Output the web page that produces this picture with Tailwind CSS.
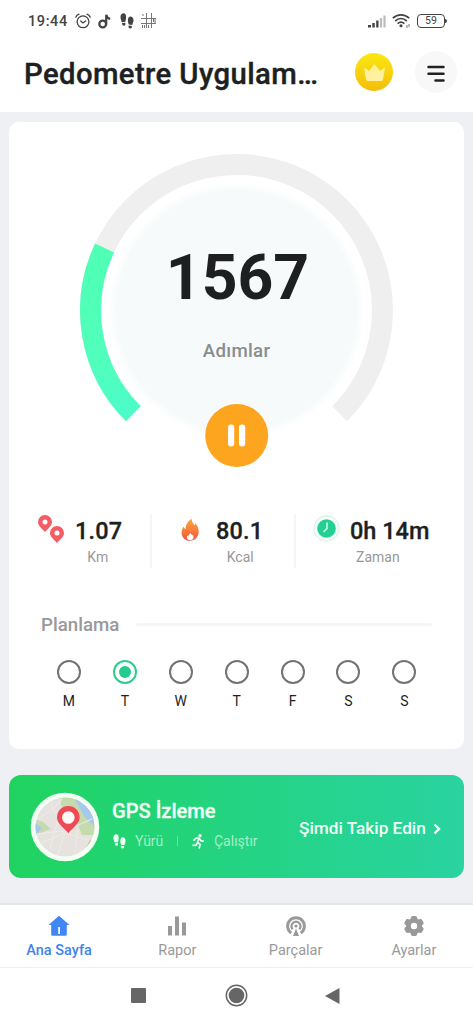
<!DOCTYPE html>
<html lang="tr">
<head>
<meta charset="utf-8">
<meta name="viewport" content="width=device-width, initial-scale=1">
<title>Pedometre Uygulaması</title>
<script src="https://cdn.jsdelivr.net/npm/@tailwindcss/browser@4"></script>
</head>
<body class="bg-[#eef0f4] font-['Roboto',sans-serif] text-[#1e1f21]">
<svg class="hidden">
  <symbol id="steps" viewBox="0 0 14 16">
    <path d="M3.200.3C5.400.1 6.300 2.300 6.100 4.700c-.1 1.500-.5 2.800-.7 4L1.800 9.200C1.400 7.500.6 6.200.5 4.400.4 2.200 1.400.5 3.200.3zM2 10.100l3.200-.4c.6 1.500.2 2.800-1.100 3-1.300.1-2-.8-2.100-2.600zM10.700 3.500c2 .2 2.900 2 2.800 4.100-.1 1.600-.8 2.900-1.200 4.500L8.700 11.600c-.2-1.200-.8-2.400-.8-3.900C7.800 5.300 8.700 3.300 10.700 3.500zM8.700 12.500l3.300.5c-.1 1.900-.8 2.600-2 2.500-1.400-.2-1.900-1.200-1.300-3z"/>
  </symbol>
  <symbol id="pin" viewBox="0 0 14 17">
    <path fill-rule="evenodd" d="M7 0a7 7 0 0 1 7 7c0 3.600-3.300 6-7 10C3.300 13 0 10.600 0 7a7 7 0 0 1 7-7zm0 4.400a2.500 2.500 0 1 0 0 5 2.500 2.500 0 0 0 0-5z"/>
  </symbol>
</svg>
<div class="flex h-[1024px] w-[473px] flex-col overflow-hidden">
  <div class="h-[112px] bg-white">
    <div class="flex h-[42px] items-center pl-[28px] pr-[26px] text-[#444]">
      <span class="w-[47px] pt-[2px] text-[14.500px] font-medium tracking-[0.600px]">19:44</span>
      <svg class="h-4 w-4" viewBox="0 0 16 16" fill="none" stroke="currentColor" stroke-width="1.300" stroke-linecap="round"><circle cx="8" cy="8.800" r="5.900"/><path d="M5.700 8l2.300 2 2.600-2M.8 4.200C1.400 2.600 2.500 1.600 4 1.100M15.200 4.200C14.600 2.600 13.500 1.600 12 1.100"/></svg>
      <svg class="ml-[7px] h-[15px] w-[13px]" viewBox="0 0 13 15" fill="none" stroke="currentColor" stroke-width="2.200"><circle cx="4.700" cy="10" r="3.400"/><path d="M8.200 10.500V.8C8.700 3.400 10 4.500 12.200 4.900"/></svg>
      <svg class="ml-[9px] h-4 w-[14px] fill-current"><use href="#steps"/></svg>
      <svg class="ml-[7px] h-4 w-4" viewBox="0 0 16 16" fill="none" stroke="#777" stroke-width="1"><path d="M5.500 0v15M10.500 0v15M0 5.500h15M0 10.500h15M14 6v4M1 2h2M1.500 12v3M3.500 12v3M7.500 12v3M12.500 6v3"/></svg>
      <svg class="ml-auto h-[14px] w-[18px]" viewBox="0 0 18 14" fill="#444"><path d="M0 11h3v2.500H0zM4.300 9h2.500v4.500H4.300zM8.200 6.500h2.300v7H8.200z"/><path fill="#bbb" d="M11.900 4h2.200v9.500h-2.200zM15.400 1.500h2.200v12h-2.200z"/></svg>
      <svg class="ml-[6px] h-4 w-[19px]" viewBox="0 0 19 16" fill="none" stroke="#444" stroke-width="1.700"><path d="M.8 5.200C5.600.7 12.400.7 17.200 5.200M3.200 8C6.700 4.800 11.300 4.800 14.800 8M5.600 10.700c2.100-1.900 4.700-1.900 6.800 0"/><circle cx="9" cy="12.800" r=".7"/><path stroke-width="1" stroke="#777" d="M15 12v3M17 11v3"/></svg>
      <div class="ml-[6px] flex h-[14px] w-[28px] items-center justify-center rounded-[4px] border-[1.500px] border-[#444] text-[10.500px] leading-none">59</div>
      <div class="h-1 w-[2px] rounded-r bg-[#444]"></div>
    </div>
    <div class="flex h-[60px] items-center pl-[24px]">
      <h1 class="w-[331px] pt-[3px] text-[29.300px] leading-[40px] font-medium tracking-[0.400px] whitespace-nowrap [-webkit-text-stroke:0.400px_#1e1f21]">Pedometre Uygulam…</h1>
      <div class="flex h-[38px] w-[38px] items-center justify-center rounded-full bg-gradient-to-b from-[#fbe810] to-[#f3bd0a]">
        <svg class="h-[17px] w-[21px]" viewBox="0 0 21 17"><path d="M.6 4.300 5 7.500 10.500.8 16 7.500l4.400-3.200-1.900 11.500q-.2.700-1 .7h-14q-.8 0-1-.7z" fill="#fff1a0" stroke="#fff1a0" stroke-linejoin="round"/></svg>
      </div>
      <div class="ml-[22px] flex h-[42px] w-[42px] items-center justify-center rounded-full bg-[#f8f8f9]">
        <svg class="mt-[2px] h-[17px] w-[18px]" viewBox="0 0 18 17" stroke="#222" stroke-width="2.500" stroke-linecap="round"><path d="M1.500 2h15M1.500 8.800h15M8.500 15.500h8"/></svg>
      </div>
    </div>
  </div>

  <div class="mx-[9px] mt-[10px] h-[627px] rounded-[10px] bg-white">
    <div class="relative h-[350px]">
      <svg class="absolute left-0 top-0 h-[350px] w-[455px]" viewBox="9 122 455 350" fill="none">
        <defs>
          <radialGradient id="disc"><stop offset=".93" stop-color="#f6fafb"/><stop offset="1" stop-color="#f6fafb" stop-opacity="0"/></radialGradient>
          <linearGradient id="arc" x1="0" y1="0" x2="0" y2="1"><stop stop-color="#4fffb4"/><stop offset=".7" stop-color="#50ffbc"/><stop offset="1" stop-color="#4cfbc8"/></linearGradient>
        </defs>
        <circle cx="236.500" cy="310.500" r="128" fill="url(#disc)"/>
        <path d="M133.300 413.700A146 146 0 1 1 339.700 413.700" stroke="#efeff0" stroke-width="21"/>
        <path d="M133.300 413.700A146 146 0 0 1 104.600 247.900" stroke="url(#arc)" stroke-width="21"/>
        <circle cx="236.700" cy="435.500" r="31.500" fill="#fda51e"/>
        <rect x="228" y="424.500" width="6.200" height="22" rx="3" fill="#fff"/><rect x="239" y="424.500" width="6.200" height="22" rx="3" fill="#fff"/>
      </svg>
      <div class="relative flex flex-col items-center pt-[120px]">
        <div class="pl-[2px] text-[62.500px] leading-[72px] font-bold">1567</div>
        <div class="mt-[25px] text-[18.700px] leading-6 font-medium tracking-[0.300px] text-[#8a8c8d]">Adımlar</div>
      </div>
    </div>

    <div class="flex h-[128px] pt-[42px]">
      <div class="flex h-[54px] w-[141px] pl-[29px]">
        <svg class="h-[30px] w-[27px] fill-[#f55d66]"><use href="#pin" x="0" y="1" width="14" height="17"/><use href="#pin" x="12" y="12" width="14" height="17"/></svg>
        <div class="ml-[10px] flex flex-col pt-[3px]"><b class="text-[23.500px] leading-7 font-medium tracking-[0.200px] [-webkit-text-stroke:0.300px_#1e1f21]">1.07</b><span class="-ml-[2px] pt-[2px] text-center text-[14px] leading-5 text-[#999]">Km</span></div>
      </div>
      <div class="flex h-[54px] w-[144px] border-l-2 border-[#f5f5f6] pl-[28px]">
        <svg class="mt-[4px] h-[24px] w-[20px]" viewBox="0 0 20 24"><defs><linearGradient id="fire" x1="0" y1="0" x2="0" y2="1"><stop stop-color="#fda43a"/><stop offset=".5" stop-color="#f9803a"/><stop offset="1" stop-color="#ed4f43"/></linearGradient></defs><path fill="url(#fire)" d="M11.500.8c.3 2.800 1.800 4.600 3 6.800.7-.8.8-1.700.8-2.700 2.500 3 3.800 6.500 3.300 10.200-.6 4.400-4 7.700-8.500 7.700-4.800 0-8.300-3.300-8.500-7.900C1.500 11.800 3 9.700 3.800 8.600c.3 1.400.7 2.200 1.800 2.700C5.500 6.400 8.200 3.200 11.500.8z"/><path fill="#fff" d="M10.800 15c.3 1.300 1 2 1.600 2.600l.6-.8c1.300 2.600.2 5.400-2.800 5.400-3 0-4.100-2.500-2.900-4.600l1 1.200c.1-1.800.9-2.900 2.500-3.800z"/></svg>
        <div class="ml-[16px] flex flex-col pt-[3px]"><b class="text-[23.500px] leading-7 font-medium tracking-[0.200px] [-webkit-text-stroke:0.300px_#1e1f21]">80.1</b><span class="pt-[2px] pl-[1px] text-center text-[14px] leading-5 text-[#999]">Kcal</span></div>
      </div>
      <div class="flex h-[54px] grow border-l-2 border-[#f5f5f6] pl-[16px]">
        <svg class="h-[29px] w-[29px]" viewBox="0 0 29 29" fill="none"><circle cx="14.500" cy="14.500" r="12.500" fill="#f6fdfa" stroke="#dcf3ea" stroke-width="1.300"/><circle cx="14.500" cy="14.500" r="9.300" fill="#25cf94"/><path d="M15 9v5.500l-3 3" stroke="#c9ffe9" stroke-width="1.600" stroke-linecap="round"/></svg>
        <div class="ml-[9px] flex flex-col items-start pt-[3px]"><b class="text-[23.500px] leading-7 font-medium whitespace-nowrap [-webkit-text-stroke:0.300px_#1e1f21]">0h 14m</b><span class="pt-[2px] pl-[6px] text-[14px] leading-5 text-[#999]">Zaman</span></div>
      </div>
    </div>

    <div class="flex h-[50px] items-center pr-[32px] pl-[32px]">
      <span class="w-[95px] pt-[1px] text-[18.700px] font-medium text-[#999]">Planlama</span>
      <div class="-mt-[2px] h-[3px] grow rounded bg-[#f6f6f7]"></div>
    </div>
    <div class="mt-[10px] flex pl-[32px] text-center text-[14px] leading-5">
      <div class="flex w-[55.900px] flex-col items-center gap-[7px]"><i class="h-6 w-6 rounded-full border-[2.500px] border-[#737373]"></i>M</div>
      <div class="flex w-[55.900px] flex-col items-center gap-[7px]"><i class="flex h-6 w-6 items-center justify-center rounded-full border-[2.500px] border-[#2dcd92]"><i class="h-3 w-3 rounded-full bg-[#22cc8d]"></i></i>T</div>
      <div class="flex w-[55.900px] flex-col items-center gap-[7px]"><i class="h-6 w-6 rounded-full border-[2.500px] border-[#737373]"></i>W</div>
      <div class="flex w-[55.900px] flex-col items-center gap-[7px]"><i class="h-6 w-6 rounded-full border-[2.500px] border-[#737373]"></i>T</div>
      <div class="flex w-[55.900px] flex-col items-center gap-[7px]"><i class="h-6 w-6 rounded-full border-[2.500px] border-[#737373]"></i>F</div>
      <div class="flex w-[55.900px] flex-col items-center gap-[7px]"><i class="h-6 w-6 rounded-full border-[2.500px] border-[#737373]"></i>S</div>
      <div class="flex w-[55.900px] flex-col items-center gap-[7px]"><i class="h-6 w-6 rounded-full border-[2.500px] border-[#737373]"></i>S</div>
    </div>
  </div>

  <div class="mx-[9px] mt-[26px] flex h-[103px] rounded-[12px] bg-gradient-to-r from-[#20d35f] to-[#2ad3a0] pl-[21px] text-[#f0fff5]">
    <svg class="mt-[17px] h-[70px] w-[70px]" viewBox="0 0 70 70">
      <defs><clipPath id="map"><circle cx="35" cy="35" r="29.500"/></clipPath></defs>
      <circle cx="35" cy="35" r="34.300" fill="#f4fff4"/>
      <g clip-path="url(#map)">
        <path fill="#e6e2df" d="M0 0h70v70H0z"/>
        <path fill="#c5dbad" d="M30 0h40v43H52L48 33 31 13zM5 27l8 3 8 7-16 6z"/>
        <path fill="#a6c8ef" d="M44 6l20 12v16L54 24zM3 28l4 4 5 4-8 9z"/>
        <path stroke="#efebe6" stroke-width="1" fill="none" d="M6 28C20 20 30 14 35 0M8 52l27-11 26 8M35 41l-8 24M20 9l8 18-8 30M48 36l-4 28M5 42l30-3 27-12"/>
        <path stroke="#b8c8a0" stroke-width="2" d="M61 48l-4 8"/>
      </g>
      <g transform="translate(27 14)"><path fill="#ec4a55" d="M11.300 0a11.300 11.300 0 0 1 11.300 11.300c0 6.500-6.500 10-11.300 16-4.800-6-11.300-9.500-11.300-16A11.300 11.300 0 0 1 11.300 0z"/><circle cx="11.300" cy="11.500" r="6.300" fill="#fffaf5"/></g>
    </svg>
    <div class="ml-[12px] w-[187px] pt-[23px]">
      <div class="text-[20.100px] leading-[26px] font-medium [-webkit-text-stroke:0.300px_#f0fff5]">GPS İzleme</div>
      <div class="mt-[7px] flex h-5 items-center text-[14px] text-[#a4efc3]">
        <svg class="ml-[1px] h-[15px] w-[13px] fill-[#f0fff5]"><use href="#steps"/></svg>
        <span class="ml-[9px] w-[42px] pt-[1px]">Yürü</span>
        <i class="h-[10px] w-px bg-[#6be4a0]"></i>
        <svg class="ml-[14px] h-[15px] w-3" viewBox="0 0 12 15" fill="none" stroke="#f0fff5" stroke-width="1.700" stroke-linecap="round" stroke-linejoin="round"><circle cx="8" cy="1.700" r=".8" fill="#f0fff5"/><path d="M2 6.200 4.300 4l3 .3 1.700 2.500 2.100.3M6.700 5 5.500 8.300l2.600 2-.8 3.700M5.300 8.600l-1.100 2.500-3.200.3"/></svg>
        <span class="ml-[10px] pt-[1px]">Çalıştır</span>
      </div>
    </div>
    <div class="flex h-[103px] items-center pt-[4px]">
      <span class="w-[134px] text-[17.200px] font-medium whitespace-nowrap">Şimdi Takip Edin</span>
      <svg class="h-[12px] w-[8px]" viewBox="0 0 8 12" fill="none" stroke="#f0fff5" stroke-width="2.400"><path d="M1.500 1.500 6 6l-4.500 4.500"/></svg>
    </div>
  </div>

  <div class="mt-[25px] flex h-[64px] border-t-2 border-[#e4e5e7] bg-white pt-[10px] text-center text-[14.500px] leading-5 text-[#999]">
    <div class="flex w-[118.250px] flex-col items-center gap-[4px] font-medium text-[#4184e8]">
      <svg class="h-[22px] w-[22px]" viewBox="0 0 22 22"><path fill="#4086f4" fill-rule="evenodd" d="M11 .8 21.500 10h-2.700v9.500q0 1.300-1.300 1.300h-13q-1.300 0-1.300-1.300V10H.5zM10.200 12v7h1.800v-7z"/></svg>Ana Sayfa</div>
    <div class="flex w-[118.250px] flex-col items-center gap-[4px]">
      <svg class="h-[22px] w-[22px]" viewBox="0 0 22 22" fill="#999"><path d="M2 11h4v9.500H2zM9 1.500h4v19H9zM16 7.500h4v13h-4z"/></svg>Rapor</div>
    <div class="flex w-[118.250px] flex-col items-center gap-[4px]">
      <svg class="h-[22px] w-[22px]" viewBox="0 0 22 22" fill="none" stroke="#999"><path stroke-width="2.900" d="M6.200 18a8.400 8.400 0 1 1 9.600 0"/><path stroke-width="2.400" d="M7.600 14.200a4.500 4.500 0 1 1 6.800 0"/><circle cx="11" cy="11" r="1.600" fill="#999" stroke="none"/><path d="M11 13.500 14 21H8z" fill="#999" stroke="none"/></svg>Parçalar</div>
    <div class="flex w-[118.250px] flex-col items-center gap-[4px]">
      <svg class="h-[22px] w-[22px]" viewBox="0 0 22 22"><path fill="#999" stroke="#999" stroke-width="3" stroke-linejoin="round" d="M9.600 2.500h2.800l1 2.500 1.700 1 2.700-.4 1.300 2.400-1.600 2.100v1.800l1.600 2.100-1.300 2.400-2.700-.4-1.700 1-1 2.500H9.600l-1-2.500-1.700-1-2.700.4L2.900 14l1.600-2.100v-1.800L2.900 8l1.300-2.400 2.700.4 1.700-1z"/><circle cx="11" cy="11" r="3.200" fill="#fff"/></svg>Ayarlar</div>
  </div>
  <div class="flex grow items-start border-t border-[#f0f0f1] bg-white pt-[16px] pl-[131px]">
    <div class="mt-[4px] h-[15px] w-[15px] rounded-[1px] bg-[#666]"></div>
    <svg class="ml-[79px] h-[23px] w-[23px]" viewBox="0 0 23 23"><circle cx="11.500" cy="11.500" r="10.200" fill="none" stroke="#666" stroke-width="1.500"/><circle cx="11.500" cy="11.500" r="7.800" fill="#666"/></svg>
    <svg class="mt-[4px] ml-[77px] h-4 w-[15px]" viewBox="0 0 15 16"><path fill="#666" d="M0 8 14.500 0v16z"/></svg>
  </div>
</div>
</body>
</html>
